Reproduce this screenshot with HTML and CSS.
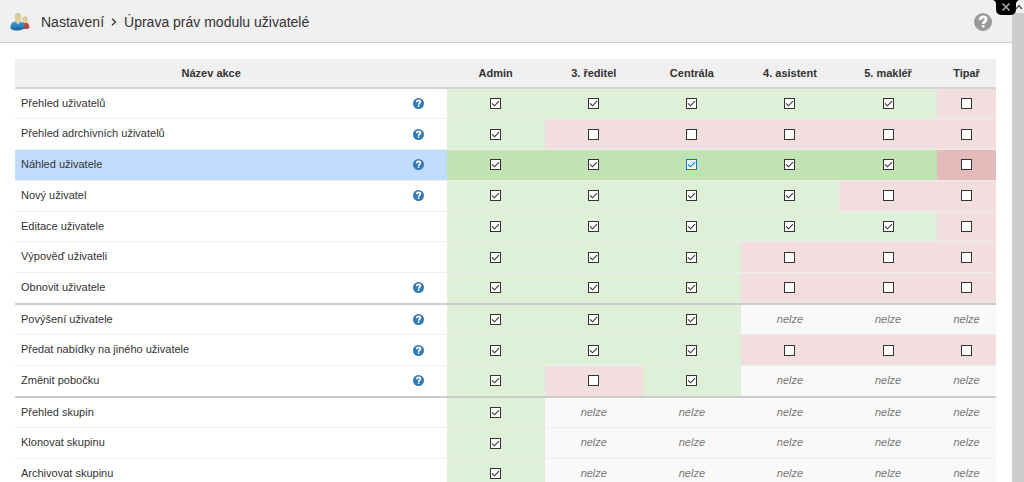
FILE: index.html
```html
<!DOCTYPE html>
<html lang="cs">
<head>
<meta charset="utf-8">
<title>Úprava práv modulu uživatelé</title>
<link rel="stylesheet" href="styles.css">
</head>
<body>
<svg class="defs" aria-hidden="true">
  <symbol id="help" viewBox="0 0 20 20">
    <circle cx="10" cy="10" r="10" fill="currentColor"/>
    <path class="mark" d="M6.7 7.8C6.7 5.6 8.2 4.4 10.2 4.4C12.2 4.4 13.5 5.5 13.5 7.2C13.5 9.6 10.2 9.5 10.2 12.1"/>
    <rect class="dot" x="8.8" y="13.4" width="2.8" height="2.8"/>
  </symbol>
</svg>
<div class="page">
  <header class="topbar">
    <svg class="users" viewBox="0 0 20 20" aria-hidden="true">
      <defs>
        <linearGradient id="blue" x1="0" y1="0" x2="0" y2="1"><stop offset="0" stop-color="#4aa5dc"/><stop offset="1" stop-color="#145f9f"/></linearGradient>
        <linearGradient id="skin" x1="0" y1="0" x2="0" y2="1"><stop offset="0" stop-color="#c9c998"/><stop offset="1" stop-color="#ead2a2"/></linearGradient>
      </defs>
      <path d="M11 17V12.500Q11.500 10 15 10Q19 10 19.500 15.500Q19 17 15 17Z" fill="#b5473f"/>
      <ellipse cx="15" cy="7.700" rx="2.700" ry="3.500" fill="url(#skin)"/>
      <path d="M.5 15.500Q.5 9.700 5 9.500H10Q14.500 10 14.500 16Q12 18.500 7.500 18.500Q2.500 18.500 .5 16.500Z" fill="url(#blue)"/>
      <path d="M5.500 9L8 12.500L10.500 9Z" fill="#e2dfb8"/>
      <ellipse cx="8" cy="5.500" rx="3.300" ry="4.500" fill="url(#skin)"/>
    </svg>
    <h1 class="title"><a href="#nastaveni">Nastavení</a><svg class="chevron" viewBox="0 0 6 8" aria-hidden="true"><path d="M1 .8L4.500 4L1 7.200"/></svg><span>Úprava práv modulu uživatelé</span></h1>
    <button class="help-main" type="button" aria-label="Nápověda"><svg viewBox="0 0 20 20"><use href="#help"/></svg></button>
  </header>
  <main class="content">
    <table class="rights">
      <colgroup><col class="c-name"><col class="c-help"><col class="c-role" span="5"><col class="c-last"></colgroup>
      <thead>
        <tr><th scope="col">Název akce</th><td></td><th scope="col">Admin</th><th scope="col">3. ředitel</th><th scope="col">Centrála</th><th scope="col">4. asistent</th><th scope="col">5. makléř</th><th scope="col">Tipař</th></tr>
      </thead>
      <tbody>
        <tr>
          <th scope="row">Přehled uživatelů</th>
          <td class="h"><button type="button" aria-label="Nápověda"><svg viewBox="0 0 20 20"><use href="#help"/></svg></button></td>
          <td class="on"><input type="checkbox" aria-label="Admin" checked></td>
          <td class="on"><input type="checkbox" aria-label="3. ředitel" checked></td>
          <td class="on"><input type="checkbox" aria-label="Centrála" checked></td>
          <td class="on"><input type="checkbox" aria-label="4. asistent" checked></td>
          <td class="on"><input type="checkbox" aria-label="5. makléř" checked></td>
          <td class="off"><input type="checkbox" aria-label="Tipař"></td>
        </tr>
        <tr>
          <th scope="row">Přehled adrchivních uživatelů</th>
          <td class="h"><button type="button" aria-label="Nápověda"><svg viewBox="0 0 20 20"><use href="#help"/></svg></button></td>
          <td class="on"><input type="checkbox" aria-label="Admin" checked></td>
          <td class="off"><input type="checkbox" aria-label="3. ředitel"></td>
          <td class="off"><input type="checkbox" aria-label="Centrála"></td>
          <td class="off"><input type="checkbox" aria-label="4. asistent"></td>
          <td class="off"><input type="checkbox" aria-label="5. makléř"></td>
          <td class="off"><input type="checkbox" aria-label="Tipař"></td>
        </tr>
        <tr class="active">
          <th scope="row">Náhled uživatele</th>
          <td class="h"><button type="button" aria-label="Nápověda"><svg viewBox="0 0 20 20"><use href="#help"/></svg></button></td>
          <td class="on"><input type="checkbox" aria-label="Admin" checked></td>
          <td class="on"><input type="checkbox" aria-label="3. ředitel" checked></td>
          <td class="on"><input class="current" type="checkbox" aria-label="Centrála" checked></td>
          <td class="on"><input type="checkbox" aria-label="4. asistent" checked></td>
          <td class="on"><input type="checkbox" aria-label="5. makléř" checked></td>
          <td class="off"><input type="checkbox" aria-label="Tipař"></td>
        </tr>
        <tr>
          <th scope="row">Nový uživatel</th>
          <td class="h"><button type="button" aria-label="Nápověda"><svg viewBox="0 0 20 20"><use href="#help"/></svg></button></td>
          <td class="on"><input type="checkbox" aria-label="Admin" checked></td>
          <td class="on"><input type="checkbox" aria-label="3. ředitel" checked></td>
          <td class="on"><input type="checkbox" aria-label="Centrála" checked></td>
          <td class="on"><input type="checkbox" aria-label="4. asistent" checked></td>
          <td class="off"><input type="checkbox" aria-label="5. makléř"></td>
          <td class="off"><input type="checkbox" aria-label="Tipař"></td>
        </tr>
        <tr>
          <th scope="row">Editace uživatele</th>
          <td class="h"></td>
          <td class="on"><input type="checkbox" aria-label="Admin" checked></td>
          <td class="on"><input type="checkbox" aria-label="3. ředitel" checked></td>
          <td class="on"><input type="checkbox" aria-label="Centrála" checked></td>
          <td class="on"><input type="checkbox" aria-label="4. asistent" checked></td>
          <td class="on"><input type="checkbox" aria-label="5. makléř" checked></td>
          <td class="off"><input type="checkbox" aria-label="Tipař"></td>
        </tr>
        <tr>
          <th scope="row">Výpověď uživateli</th>
          <td class="h"></td>
          <td class="on"><input type="checkbox" aria-label="Admin" checked></td>
          <td class="on"><input type="checkbox" aria-label="3. ředitel" checked></td>
          <td class="on"><input type="checkbox" aria-label="Centrála" checked></td>
          <td class="off"><input type="checkbox" aria-label="4. asistent"></td>
          <td class="off"><input type="checkbox" aria-label="5. makléř"></td>
          <td class="off"><input type="checkbox" aria-label="Tipař"></td>
        </tr>
        <tr>
          <th scope="row">Obnovit uživatele</th>
          <td class="h"><button type="button" aria-label="Nápověda"><svg viewBox="0 0 20 20"><use href="#help"/></svg></button></td>
          <td class="on"><input type="checkbox" aria-label="Admin" checked></td>
          <td class="on"><input type="checkbox" aria-label="3. ředitel" checked></td>
          <td class="on"><input type="checkbox" aria-label="Centrála" checked></td>
          <td class="off"><input type="checkbox" aria-label="4. asistent"></td>
          <td class="off"><input type="checkbox" aria-label="5. makléř"></td>
          <td class="off"><input type="checkbox" aria-label="Tipař"></td>
        </tr>
      </tbody>
      <tbody>
        <tr>
          <th scope="row">Povýšení uživatele</th>
          <td class="h"><button type="button" aria-label="Nápověda"><svg viewBox="0 0 20 20"><use href="#help"/></svg></button></td>
          <td class="on"><input type="checkbox" aria-label="Admin" checked></td>
          <td class="on"><input type="checkbox" aria-label="3. ředitel" checked></td>
          <td class="on"><input type="checkbox" aria-label="Centrála" checked></td>
          <td class="na">nelze</td><td class="na">nelze</td><td class="na">nelze</td>
        </tr>
        <tr>
          <th scope="row">Předat nabídky na jiného uživatele</th>
          <td class="h"><button type="button" aria-label="Nápověda"><svg viewBox="0 0 20 20"><use href="#help"/></svg></button></td>
          <td class="on"><input type="checkbox" aria-label="Admin" checked></td>
          <td class="on"><input type="checkbox" aria-label="3. ředitel" checked></td>
          <td class="on"><input type="checkbox" aria-label="Centrála" checked></td>
          <td class="off"><input type="checkbox" aria-label="4. asistent"></td>
          <td class="off"><input type="checkbox" aria-label="5. makléř"></td>
          <td class="off"><input type="checkbox" aria-label="Tipař"></td>
        </tr>
        <tr>
          <th scope="row">Změnit pobočku</th>
          <td class="h"><button type="button" aria-label="Nápověda"><svg viewBox="0 0 20 20"><use href="#help"/></svg></button></td>
          <td class="on"><input type="checkbox" aria-label="Admin" checked></td>
          <td class="off"><input type="checkbox" aria-label="3. ředitel"></td>
          <td class="on"><input type="checkbox" aria-label="Centrála" checked></td>
          <td class="na">nelze</td><td class="na">nelze</td><td class="na">nelze</td>
        </tr>
      </tbody>
      <tbody>
        <tr>
          <th scope="row">Přehled skupin</th>
          <td class="h"></td>
          <td class="on"><input type="checkbox" aria-label="Admin" checked></td>
          <td class="na">nelze</td><td class="na">nelze</td><td class="na">nelze</td><td class="na">nelze</td><td class="na">nelze</td>
        </tr>
        <tr>
          <th scope="row">Klonovat skupinu</th>
          <td class="h"></td>
          <td class="on"><input type="checkbox" aria-label="Admin" checked></td>
          <td class="na">nelze</td><td class="na">nelze</td><td class="na">nelze</td><td class="na">nelze</td><td class="na">nelze</td>
        </tr>
        <tr>
          <th scope="row">Archivovat skupinu</th>
          <td class="h"></td>
          <td class="on"><input type="checkbox" aria-label="Admin" checked></td>
          <td class="na">nelze</td><td class="na">nelze</td><td class="na">nelze</td><td class="na">nelze</td><td class="na">nelze</td>
        </tr>
      </tbody>
    </table>
  </main>
</div>
<div class="scrollbar" aria-hidden="true">
  <div class="scroll-up"><svg viewBox="0 0 8 6"><path d="M1 5L4 1.500L7 5"/></svg></div>
  <div class="scroll-thumb"></div>
</div>
<button class="close" type="button" aria-label="Zavřít"><svg viewBox="0 0 26 15"><path class="tab" d="M0 0H26Q23 1 23 4V9Q23 15 17 15H9Q3 15 3 9V4Q3 1 0 0Z"/><path class="cross" d="M9.500 3.500L16.500 10.500M16.500 3.500L9.500 10.500"/></svg></button>
</body>
</html>
```
FILE: styles.css
```css
* { box-sizing: border-box; }

body {
  margin: 0;
  height: 100vh;
  display: flex;
  overflow: hidden;
  position: relative;
  background: #fff;
  color: #333;
  font-family: "Liberation Sans", Arial, sans-serif;
  font-size: 11px;
  line-height: 1.428;
}

button {
  display: block;
  padding: 0;
  border: 0;
  background: none;
  cursor: pointer;
}

svg { display: block; }
.defs { position: absolute; width: 0; height: 0; }
.mark { fill: none; stroke: #fff; stroke-width: 3; }
.dot { fill: #fff; }

.page { flex: 1; min-width: 0; }

.topbar {
  display: flex;
  align-items: center;
  padding: 12px 20px 10px 10px;
  background: #f0f0f0;
  border-bottom: 1px solid #ccc;
}
.users { width: 20px; height: 20px; }
.title {
  flex: 1;
  display: flex;
  align-items: center;
  gap: 7px;
  margin: 0 0 0 11px;
  font-size: 14px;
  line-height: 20px;
  font-weight: 400;
}
.title a { color: inherit; text-decoration: none; }
.chevron { width: 6px; height: 8px; }
.chevron path { fill: none; stroke: #333; stroke-width: 1.3; }
.help-main { color: #999; }
.help-main svg { width: 18px; height: 18px; }

.content { padding: 16px; padding-left: 15px; }

.rights {
  width: 100%;
  table-layout: fixed;
  border-collapse: collapse;
}
.c-name { width: 40%; }
.c-help { width: 4%; }
.c-role { width: 10%; }
.c-last { width: 6%; }

.rights th, .rights td {
  padding: 7px 6px;
  text-align: center;
  vertical-align: middle;
  border-top: 1px solid #ededed;
}
.rights thead th, .rights thead td {
  padding-bottom: 5px;
  background: #f0f0f0;
  border-top: 0;
  border-bottom: 2px solid #d5d5d5;
}
.rights tbody th { text-align: left; font-weight: 400; }
.rights tbody + tbody { border-top: 2px solid #ccc; }

.rights .on { background: #dff0d8; }
.rights .off { background: #f2dede; }
.rights .na { background: #f9f9f9; color: #777; font-style: italic; }
.active th, .active .h { background: #c0ddff; }
.rights .active .on { background: #c1e2b3; }
.rights .active .off { background: #e4b9b9; }

.h button { color: #337ab7; }
.h svg { width: 11px; height: 11px; }

input[type="checkbox"] {
  appearance: none;
  display: block;
  width: 11px;
  height: 11px;
  margin: 0 auto;
  background: #fff center / 9px 9px no-repeat;
  border: 1px solid #333;
}
input:checked {
  background-image: url("data:image/svg+xml,%3Csvg xmlns='http://www.w3.org/2000/svg' viewBox='0 0 9 9'%3E%3Cpath d='M1 4.300L3.500 6.800L8 2.200' fill='none' stroke='%23333' stroke-width='1.1'/%3E%3C/svg%3E");
}
input.current { border-color: #0078d7; background-color: #eef7ff; }
input.current:checked {
  background-image: url("data:image/svg+xml,%3Csvg xmlns='http://www.w3.org/2000/svg' viewBox='0 0 9 9'%3E%3Cpath d='M1 4.300L3.500 6.800L8 2.200' fill='none' stroke='%230078d7' stroke-width='1.1'/%3E%3C/svg%3E");
}

.scrollbar {
  display: flex;
  flex-direction: column;
  width: 12px;
  background: #f0f0f0;
}
.scroll-up { height: 13px; padding: 4px 0 0 3px; }
.scroll-up svg { width: 8px; height: 6px; }
.scroll-up path { fill: none; stroke: #555; stroke-width: 1.4; }
.scroll-thumb { flex: 1; background: #cdcdcd; }

.close {
  position: absolute;
  top: 0;
  right: 5px;
}
.close svg { width: 26px; height: 15px; }
.tab { fill: #000; }
.cross { fill: none; stroke: #aaa; stroke-width: 1.6; }
```
